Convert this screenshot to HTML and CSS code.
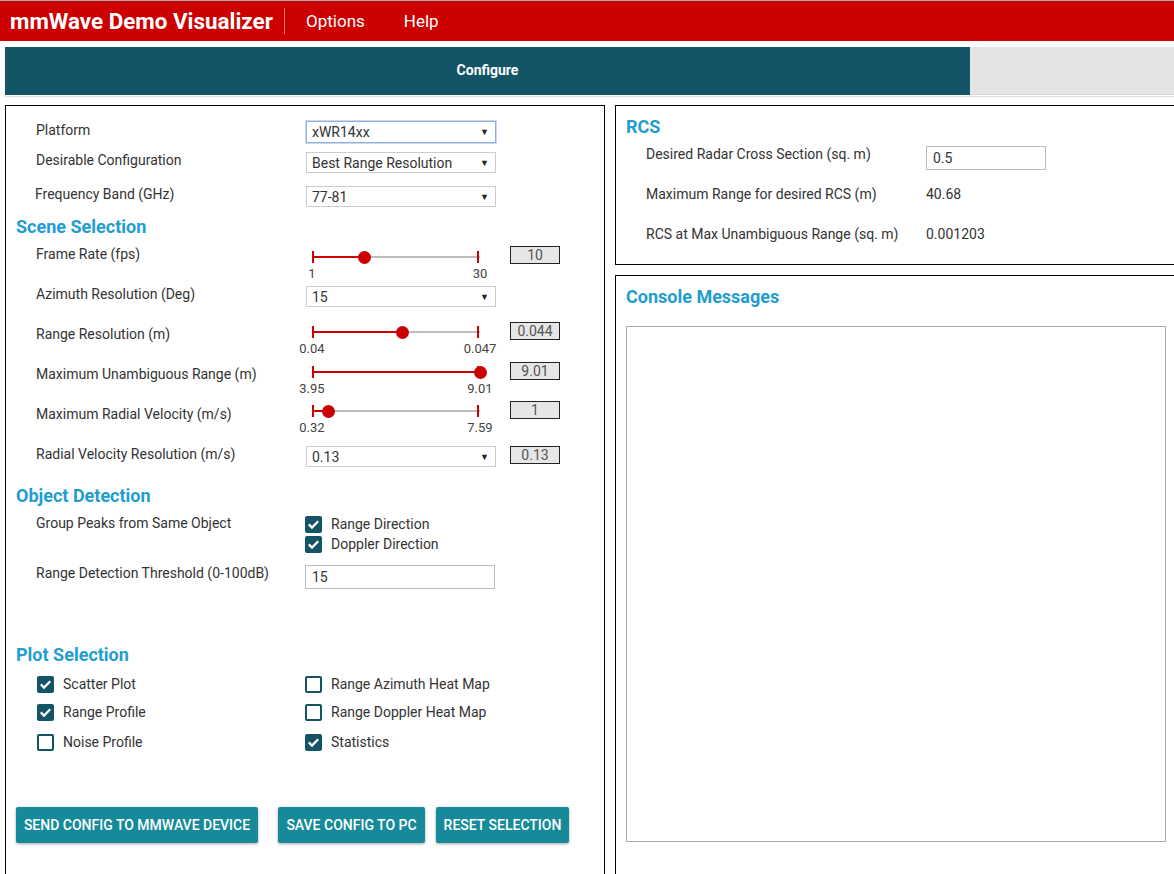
FILE: index.html
```html
<!DOCTYPE html>
<html lang="en">
<head>
<meta charset="utf-8">
<title>mmWave Demo Visualizer</title>
<link rel="stylesheet" href="styles.css">
</head>
<body>
<header class="topbar">
  <div class="brand">mmWave Demo Visualizer</div>
  <nav class="menu">
    <span class="menu-item">Options</span>
    <span class="menu-item">Help</span>
  </nav>
</header>

<div class="tabs">
  <div class="tab tab-active">Configure</div>
  <div class="tab-rest"></div>
</div>

<main class="workspace">
  <section class="panel config">
    <div class="row row-platform">
      <div class="label">Platform</div>
      <div class="select select-focus"><span>xWR14xx</span><span class="caret">▼</span></div>
    </div>
    <div class="row row-desirable">
      <div class="label">Desirable Configuration</div>
      <div class="select"><span>Best Range Resolution</span><span class="caret">▼</span></div>
    </div>
    <div class="row row-freq">
      <div class="label label-freq">Frequency Band (GHz)</div>
      <div class="select"><span>77-81</span><span class="caret">▼</span></div>
    </div>

    <h2 class="section-title scene-title">Scene Selection</h2>

    <div class="row row-40">
      <div class="label">Frame Rate (fps)</div>
      <div class="cell">
        <div class="slider-wrap slider-first">
          <div class="slider" style="--p:31%">
            <div class="track"></div><div class="fill"></div>
            <div class="tick tick-l"></div><div class="tick tick-r"></div>
            <div class="thumb"></div>
          </div>
          <div class="ticks"><span>1</span><span>30</span></div>
        </div>
      </div>
      <div class="value value-first">10</div>
    </div>

    <div class="row row-40">
      <div class="label">Azimuth Resolution (Deg)</div>
      <div class="cell">
        <div class="select select-inrow"><span>15</span><span class="caret">▼</span></div>
      </div>
    </div>

    <div class="row row-40">
      <div class="label">Range Resolution (m)</div>
      <div class="cell">
        <div class="slider-wrap">
          <div class="slider" style="--p:53.5%">
            <div class="track"></div><div class="fill"></div>
            <div class="tick tick-l"></div><div class="tick tick-r"></div>
            <div class="thumb"></div>
          </div>
          <div class="ticks"><span>0.04</span><span>0.047</span></div>
        </div>
      </div>
      <div class="value">0.044</div>
    </div>

    <div class="row row-40">
      <div class="label">Maximum Unambiguous Range (m)</div>
      <div class="cell">
        <div class="slider-wrap">
          <div class="slider" style="--p:100%">
            <div class="track"></div><div class="fill"></div>
            <div class="tick tick-l"></div><div class="tick tick-r"></div>
            <div class="thumb"></div>
          </div>
          <div class="ticks"><span>3.95</span><span>9.01</span></div>
        </div>
      </div>
      <div class="value">9.01</div>
    </div>

    <div class="row row-40">
      <div class="label">Maximum Radial Velocity (m/s)</div>
      <div class="cell">
        <div class="slider-wrap slider-up">
          <div class="slider" style="--p:9.5%">
            <div class="track"></div><div class="fill"></div>
            <div class="tick tick-l"></div><div class="tick tick-r"></div>
            <div class="thumb"></div>
          </div>
          <div class="ticks"><span>0.32</span><span>7.59</span></div>
        </div>
      </div>
      <div class="value value-up">1</div>
    </div>

    <div class="row row-40">
      <div class="label">Radial Velocity Resolution (m/s)</div>
      <div class="cell">
        <div class="select select-inrow"><span>0.13</span><span class="caret">▼</span></div>
      </div>
      <div class="value value-first">0.13</div>
    </div>

    <h2 class="section-title">Object Detection</h2>

    <div class="row row-group">
      <div class="label label-obj">Group Peaks from Same Object</div>
      <div class="checks">
        <div class="check"><span class="box on"><svg viewBox="0 0 17 17"><path d="M3.8 8.4l3.2 3.2 6.2-6.4"/></svg></span>Range Direction</div>
        <div class="check"><span class="box on"><svg viewBox="0 0 17 17"><path d="M3.8 8.4l3.2 3.2 6.2-6.4"/></svg></span>Doppler Direction</div>
      </div>
    </div>

    <div class="row row-threshold">
      <div class="label label-obj">Range Detection Threshold (0-100dB)</div>
      <div class="input input-threshold">15</div>
    </div>

    <h2 class="section-title">Plot Selection</h2>

    <div class="plot-grid">
      <div class="check"><span class="box on"><svg viewBox="0 0 17 17"><path d="M3.8 8.4l3.2 3.2 6.2-6.4"/></svg></span>Scatter Plot</div>
      <div class="check check-right"><span class="box"></span>Range Azimuth Heat Map</div>
      <div class="check"><span class="box on"><svg viewBox="0 0 17 17"><path d="M3.8 8.4l3.2 3.2 6.2-6.4"/></svg></span>Range Profile</div>
      <div class="check check-right"><span class="box"></span>Range Doppler Heat Map</div>
      <div class="check"><span class="box"></span>Noise Profile</div>
      <div class="check check-right"><span class="box on"><svg viewBox="0 0 17 17"><path d="M3.8 8.4l3.2 3.2 6.2-6.4"/></svg></span>Statistics</div>
    </div>

    <div class="actions">
      <button class="btn btn-send">SEND CONFIG TO MMWAVE DEVICE</button>
      <button class="btn btn-save">SAVE CONFIG TO PC</button>
      <button class="btn btn-reset">RESET SELECTION</button>
    </div>
  </section>

  <div class="side">
    <section class="panel rcs">
      <h2 class="section-title rcs-title">RCS</h2>
      <div class="rcs-row">
        <div class="rcs-label">Desired Radar Cross Section (sq. m)</div>
        <div class="input input-rcs">0.5</div>
      </div>
      <div class="rcs-row">
        <div class="rcs-label">Maximum Range for desired RCS (m)</div>
        <div class="rcs-value">40.68</div>
      </div>
      <div class="rcs-row">
        <div class="rcs-label">RCS at Max Unambiguous Range (sq. m)</div>
        <div class="rcs-value">0.001203</div>
      </div>
    </section>
    <section class="panel console">
      <h2 class="section-title console-title">Console Messages</h2>
      <div class="console-box"></div>
    </section>
  </div>
</main>
</body>
</html>
```

FILE: styles.css
```css
* { box-sizing: border-box; }

html, body {
  margin: 0;
  padding: 0;
}

body {
  width: 1174px;
  height: 874px;
  overflow: hidden;
  font-family: Roboto, "Liberation Sans", Arial, sans-serif;
  font-size: 14px;
  color: #333;
  background: #fff;
}

/* Top bar */
.topbar {
  height: 41px;
  border-top: 1px solid #a8a8a8;
  background: #cc0000;
  display: flex;
  align-items: center;
  color: #fff;
}

.brand {
  font-size: 22.4px;
  font-weight: 700;
  padding-left: 10px;
  width: 285px;
  height: 26px;
  line-height: 26px;
  border-right: 1px solid #e87a7a;
  white-space: nowrap;
}

.menu {
  display: flex;
  gap: 39px;
  padding-left: 21px;
}

.menu-item {
  font-size: 17px;
  line-height: 26px;
}

/* Tabs */
.tabs {
  margin-top: 6px;
  margin-left: 5px;
  height: 49px;
  display: flex;
  box-shadow: 0 1px 1px rgba(0,0,0,0.12);
}

.tab {
  height: 48px;
}

.tab-active {
  width: 965px;
  background: #135566;
  color: #fff;
  font-weight: 700;
  font-size: 14px;
  line-height: 46px;
  text-align: center;
}

.tab-rest {
  flex: 1;
  height: 48px;
  background: #e4e4e4;
  border-bottom: 1px solid #d8d8d8;
}

/* Workspace */
.workspace {
  display: flex;
  gap: 10px;
  padding-left: 5px;
  margin-top: 9px;
}

.panel {
  border: 1px solid #000;
  background: #fff;
}

.config {
  width: 600px;
  height: 790px;
  flex: none;
  padding-top: 14px;
}

.side {
  width: 565px;
  flex: none;
  display: flex;
  flex-direction: column;
  gap: 10px;
}

/* Rows */
.row {
  display: flex;
  align-items: flex-start;
}

.label {
  width: 300px;
  flex: none;
  padding-left: 30px;
  line-height: 20px;
}

.label-freq { padding-left: 29px; }
.label-obj { width: 299px; }

.row-platform { height: 30px; }
.row-platform .select { margin-top: 1px; height: 22px; }
.row-desirable { height: 34px; }
.row-desirable .select { margin-top: 2px; }
.row-freq { height: 31px; }
.row-freq .select { margin-top: 2px; }

.row-40 { height: 40px; }

.cell {
  width: 190px;
  flex: none;
}

.select {
  width: 190px;
  height: 21px;
  border: 1px solid #ccc;
  display: flex;
  align-items: center;
  justify-content: space-between;
  padding: 0 6px 0 5px;
  font-size: 14px;
  color: #333;
  background: #fff;
}

.select-focus {
  border: 1px solid #8fb0de;
  box-shadow: 0 0 0 1px #c9d9f1;
}

.select-inrow { margin-top: 2px; }

.caret {
  font-size: 9px;
  color: #222;
}

/* Section titles */
.section-title {
  margin: 0;
  padding-left: 10px;
  font-size: 18px;
  font-weight: 700;
  line-height: 24px;
  color: #229dd0;
}

.scene-title { margin-bottom: 5px; }

/* Slider */
.slider-wrap {
  margin-top: 1px;
  margin-left: 6px;
  width: 168px;
}

.slider-first { margin-top: 6px; }
.slider-up { margin-top: 0; }

.slider {
  position: relative;
  height: 14px;
}

.track {
  position: absolute;
  left: 0;
  right: 0;
  top: 6px;
  height: 2px;
  background: #bdbdbd;
}

.fill {
  position: absolute;
  left: 0;
  top: 6px;
  height: 2px;
  width: var(--p);
  background: #cc0000;
}

.tick {
  position: absolute;
  top: 1px;
  width: 2px;
  height: 12px;
  background: #cc0000;
}

.tick-l { left: 0; }
.tick-r { right: 1px; }

.thumb {
  position: absolute;
  top: 1px;
  left: var(--p);
  width: 13px;
  height: 13px;
  margin-left: -6px;
  border-radius: 50%;
  background: #cc0000;
}

.ticks {
  display: flex;
  justify-content: space-between;
  margin: 2px -30px 0;
  line-height: 16px;
  font-size: 13px;
  color: #444;
}

.ticks span {
  width: 60px;
  text-align: center;
}

/* Value box */
.value {
  margin-left: 14px;
  margin-top: -2px;
  width: 50px;
  height: 18px;
  border: 1px solid #222;
  background: #e6e6e6;
  text-align: center;
  line-height: 16px;
  font-size: 14px;
  color: #555;
}

.value-first { margin-top: 2px; }
.value-up { margin-top: -3px; }

/* Object detection */
.row-group {
  height: 50px;
  margin-top: 5px;
}

.checks {
  display: flex;
  flex-direction: column;
  padding-top: 1px;
}

.check {
  display: flex;
  align-items: center;
  height: 20px;
  line-height: 20px;
  gap: 9px;
}

.box {
  width: 17px;
  height: 17px;
  flex: none;
  border: 2px solid #135566;
  border-radius: 2px;
  background: #fff;
  display: flex;
}

.box.on {
  background: #135566;
  border: none;
}

.box svg {
  width: 17px;
  height: 17px;
}

.box path {
  fill: none;
  stroke: #fff;
  stroke-width: 2.2;
}

.row-threshold { height: 80px; }

.input {
  border: 1px solid #bbb;
  height: 24px;
  line-height: 22px;
  padding-left: 6px;
  font-size: 14px;
  color: #333;
}

.input-threshold {
  width: 190px;
  margin-top: 2px;
}

/* Plot selection */
.plot-grid {
  display: grid;
  grid-template-columns: 268px 268px;
  grid-template-rows: 20px 20px 20px;
  row-gap: 8px;
  padding-left: 31px;
  margin-top: 7px;
}

.plot-grid .check:nth-child(n+5) { margin-top: 2px; }

/* Buttons */
.actions {
  display: flex;
  padding-left: 10px;
  margin-top: 57px;
}

.btn {
  height: 36px;
  border: none;
  border-radius: 2px;
  background: #178a9a;
  color: #fff;
  font-family: Roboto, "Liberation Sans", Arial, sans-serif;
  font-size: 14px;
  font-weight: 500;
  padding: 0;
  box-shadow: 0 1px 3px rgba(0,0,0,0.35);
}

.btn-send { width: 242px; }
.btn-save { width: 147px; margin-left: 20px; }
.btn-reset { width: 133px; margin-left: 11px; }

/* RCS */
.rcs {
  height: 160px;
  padding-top: 9px;
}

.rcs-title { margin-bottom: 5px; }

.rcs-row {
  height: 40px;
  display: flex;
  align-items: flex-start;
}

.rcs-label {
  width: 310px;
  padding-left: 30px;
  line-height: 20px;
}

.input-rcs {
  width: 120px;
  margin-top: 2px;
}

.rcs-value {
  line-height: 20px;
}

/* Console */
.console {
  height: 620px;
  padding-top: 9px;
  padding-left: 10px;
}

.console-title {
  padding-left: 0;
  margin-bottom: 17px;
}

.console-box {
  width: 540px;
  height: 516px;
  border: 1px solid #aaa;
}
```
